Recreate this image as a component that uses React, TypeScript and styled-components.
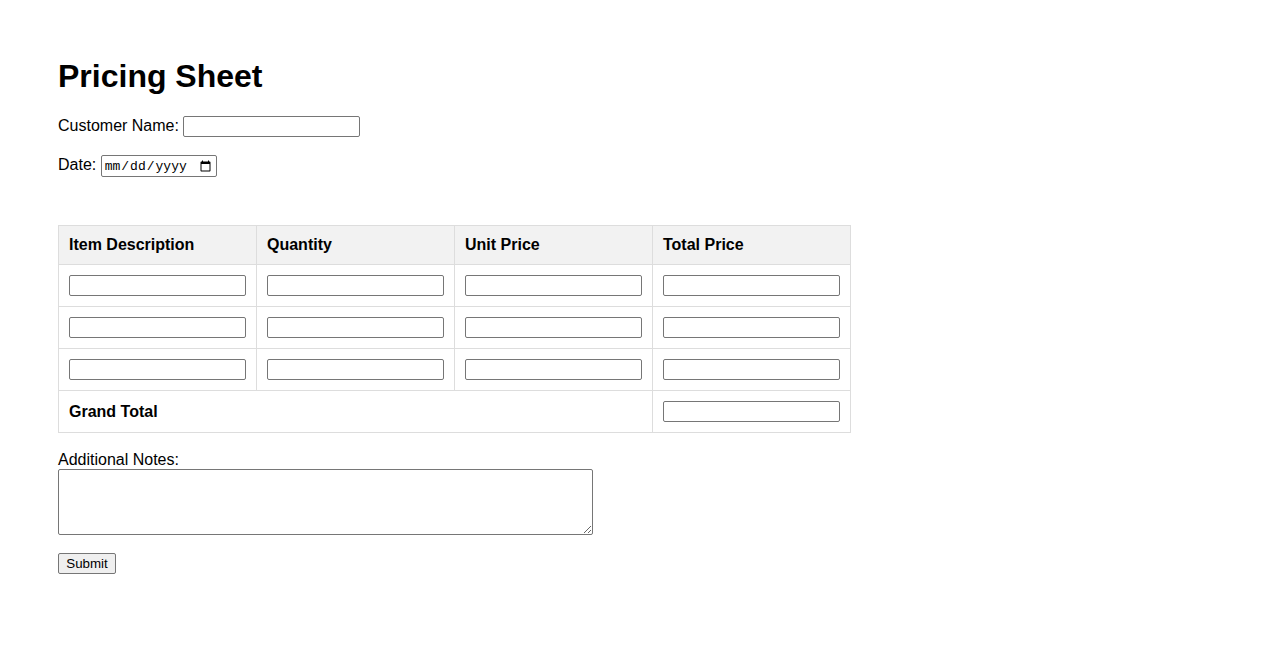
import React from "react";
import styled, { createGlobalStyle } from "styled-components";

const Global = createGlobalStyle`
  html, body { margin: 0; padding: 0; background: #fff; }
  body { font-family: "Liberation Sans", Arial, sans-serif; color: #000; }
`;

const Page = styled.div`
  padding: 58px 58px 40px;
  font-family: "Liberation Sans", Arial, sans-serif;
  font-size: 16px;
`;

const Title = styled.h1`
  font-size: 32px;
  font-weight: bold;
  margin: 0 0 21px;
`;

const Field = styled.div`
  margin-bottom: 18px;
`;

const Label = styled.label<{ $block?: boolean }>`
  display: ${(p) => (p.$block ? "block" : "inline")};
`;

const TextInput = styled.input<{ $full?: boolean }>`
  font-family: "Liberation Sans", Arial, sans-serif;
  font-size: 13.33px;
  box-sizing: border-box;
  width: ${(p) => (p.$full ? "100%" : "177px")};
  height: 21px;
  padding: 1px 2px;
  border: 1px solid #767676;
  border-radius: 2px;
  background: #fff;
  margin: 0;
`;

const DateInput = styled.input`
  font-family: "Liberation Mono", "DejaVu Sans Mono", monospace;
  font-size: 13px;
  box-sizing: border-box;
  width: 116px;
  height: 22px;
  padding: 1px 2px;
  border: 1px solid #767676;
  border-radius: 2px;
  background: #fff;
  margin: 0;
`;

const Table = styled.table`
  width: 793px;
  border-collapse: collapse;
  margin-top: 48px;
  margin-bottom: 18px;
`;

const Th = styled.th`
  background: #f2f2f2;
  border: 1px solid #ddd;
  padding: 10px;
  text-align: left;
  font-weight: bold;
  width: 25%;
`;

const Td = styled.td`
  border: 1px solid #ddd;
  padding: 10px;
  text-align: left;
  line-height: 0;
`;

const GrandLabel = styled.td`
  border: 1px solid #ddd;
  padding: 10px;
  font-weight: bold;
`;

const Notes = styled.textarea`
  display: block;
  box-sizing: border-box;
  width: 535px;
  height: 66px;
  border: 1px solid #767676;
  border-radius: 2px;
  margin: 0 0 18px;
  font-family: "Liberation Mono", monospace;
  font-size: 13px;
`;

const Button = styled.button`
  font-family: "Liberation Sans", Arial, sans-serif;
  font-size: 13.33px;
  height: 21px;
  width: 58px;
  padding: 1px 6px;
  background: #efefef;
  border: 1px solid #767676;
  border-radius: 2px;
  color: #000;
`;

const rows = [0, 1, 2];

export default function App() {
  return (
    <Page>
      <Global />
      <Title>Pricing Sheet</Title>
      <Field>
        <Label>Customer Name: </Label>
        <TextInput type="text" />
      </Field>
      <Field>
        <Label>Date: </Label>
        <DateInput type="date" />
      </Field>
      <Table>
        <thead>
          <tr>
            <Th>Item Description</Th>
            <Th>Quantity</Th>
            <Th>Unit Price</Th>
            <Th>Total Price</Th>
          </tr>
        </thead>
        <tbody>
          {rows.map((r) => (
            <tr key={r}>
              <Td><TextInput $full type="text" /></Td>
              <Td><TextInput $full type="text" /></Td>
              <Td><TextInput $full type="text" /></Td>
              <Td><TextInput $full type="text" /></Td>
            </tr>
          ))}
          <tr>
            <GrandLabel colSpan={3}>Grand Total</GrandLabel>
            <Td><TextInput $full type="text" /></Td>
          </tr>
        </tbody>
      </Table>
      <Label $block>Additional Notes:</Label>
      <Notes />
      <Button type="button">Submit</Button>
    </Page>
  );
}
